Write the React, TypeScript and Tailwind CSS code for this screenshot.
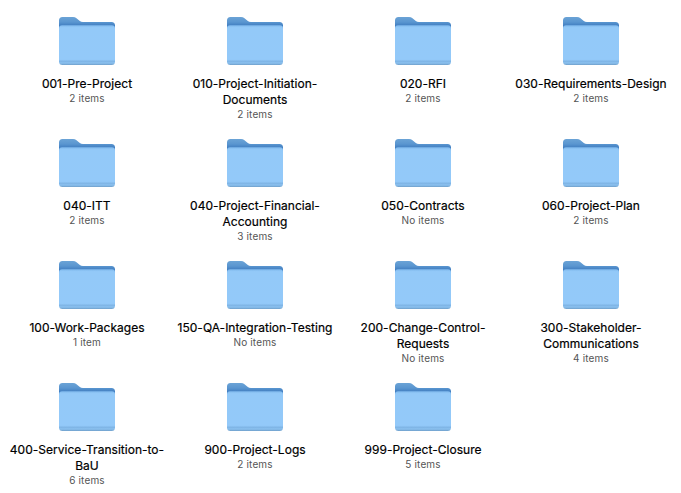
import React from "react";

type Item = { lines: string[]; count: string };

const items: Item[] = [
  { lines: ["001-Pre-Project"], count: "2 items" },
  { lines: ["010-Project-Initiation-", "Documents"], count: "2 items" },
  { lines: ["020-RFI"], count: "2 items" },
  { lines: ["030-Requirements-Design"], count: "2 items" },
  { lines: ["040-ITT"], count: "2 items" },
  { lines: ["040-Project-Financial-", "Accounting"], count: "3 items" },
  { lines: ["050-Contracts"], count: "No items" },
  { lines: ["060-Project-Plan"], count: "2 items" },
  { lines: ["100-Work-Packages"], count: "1 item" },
  { lines: ["150-QA-Integration-Testing"], count: "No items" },
  { lines: ["200-Change-Control-", "Requests"], count: "No items" },
  { lines: ["300-Stakeholder-", "Communications"], count: "4 items" },
  { lines: ["400-Service-Transition-to-", "BaU"], count: "6 items" },
  { lines: ["900-Project-Logs"], count: "2 items" },
  { lines: ["999-Project-Closure"], count: "5 items" },
];

function Folder() {
  return (
    <svg width="60" height="54" viewBox="0 0 60 54">
      <defs>
        <linearGradient id="back" x1="0" y1="0" x2="0" y2="1">
          <stop offset="0" stopColor="#6ba3d6" />
          <stop offset="0.12" stopColor="#5a96d0" />
          <stop offset="0.2" stopColor="#4380c2" />
          <stop offset="1" stopColor="#4380c2" />
        </linearGradient>
        <linearGradient id="front" x1="0" y1="0" x2="0" y2="1">
          <stop offset="0" stopColor="#7fb8ec" />
          <stop offset="0.06" stopColor="#93c9f8" />
          <stop offset="0.86" stopColor="#93c9f9" />
          <stop offset="0.91" stopColor="#7fb5e6" />
          <stop offset="0.95" stopColor="#8bc1f0" />
          <stop offset="1" stopColor="#6f9fca" />
        </linearGradient>
      </defs>
      <path d="M2 6.5Q2 3 5.5 3H16Q18 3 19.5 4.2L22.5 6.7Q24 8 26 8H54.5Q58 8 58 11.5V45H2Z" fill="url(#back)" />
      <path d="M2 14.4Q2 11.2 5 11.2H55Q58 11.2 58 14.4V47.5Q58 51 54.5 51H5.5Q2 51 2 47.5Z" fill="url(#front)" />
    </svg>
  );
}

export default function App() {
  return (
    <main className="h-[493px] w-[681px] overflow-hidden bg-white pt-[14px] pl-[3px] font-[Inter,sans-serif]">
      <div className="grid auto-rows-[122px] grid-cols-[repeat(4,168px)]">
        {items.map((item) => (
          <div key={item.lines[0]} className="flex flex-col items-center">
            <Folder />
            <div className="mt-[8px] text-center text-[12px] leading-[16px] font-normal tracking-[0.02px] whitespace-nowrap text-black [-webkit-text-stroke:0.2px_black]">
              {item.lines.map((line) => (
                <div key={line}>{line}</div>
              ))}
            </div>
            <div className="-mt-px text-[10px] leading-[14px] tracking-[0.15px] text-[#555]">{item.count}</div>
          </div>
        ))}
      </div>
    </main>
  );
}
